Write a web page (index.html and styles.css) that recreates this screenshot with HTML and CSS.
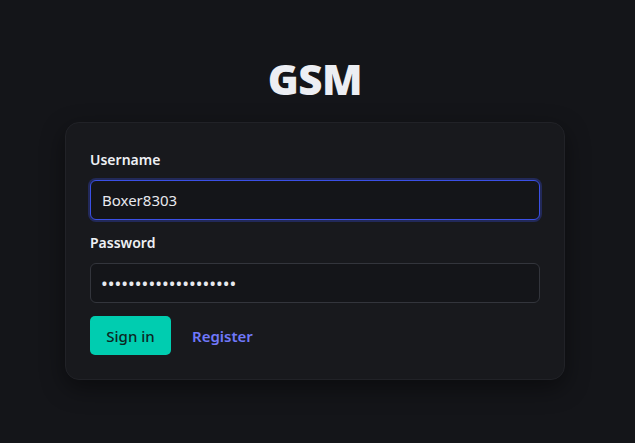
FILE: index.html
```html
<!DOCTYPE html>
<html>
<head>
<meta charset="utf-8">
<link rel="stylesheet" href="styles.css">
</head>
<body>
<main class="page">
  <h1 class="title">GSM</h1>
  <form class="card">
    <label class="label" for="u">Username</label>
    <input class="input input--focus" id="u" type="text" value="Boxer8303">
    <label class="label label--gap" for="p">Password</label>
    <input class="input input--pw" id="p" type="password" value="aaaaaaaaaaaaaaaaaaaa">
    <div class="actions">
      <button class="btn" type="button">Sign in</button>
      <a class="link" href="#">Register</a>
    </div>
  </form>
</main>
</body>
</html>
```
FILE: styles.css
```css
* { box-sizing: border-box; }
html, body { margin: 0; height: 100%; }
body {
  background: #141519;
  font-family: "Noto Sans", "Open Sans", sans-serif;
  color: #e8e9ee;
}
.page {
  display: flex;
  flex-direction: column;
  align-items: center;
  padding-top: 52px;
  padding-right: 5px;
}
.title {
  margin: 0 0 16px;
  font-family: "Open Sans", sans-serif;
  font-weight: 800;
  font-size: 42px;
  line-height: 54px;
  letter-spacing: -0.5px;
  color: #eceef3;
}
.card {
  width: 500px;
  background: #18191d;
  border: 1px solid #212227;
  border-radius: 14px;
  padding: 27px 24px 24px;
  display: flex;
  flex-direction: column;
  box-shadow: 0 8px 24px rgba(0,0,0,0.45);
}
.label {
  font-size: 14px;
  font-weight: 600;
  line-height: 20px;
  color: #eef0f4;
  margin-bottom: 10px;
}
.label--gap { margin-top: 13px; }
.input {
  height: 40px;
  width: 100%;
  background: #141519;
  border: 1px solid #33353c;
  border-radius: 6px;
  padding: 0 11px;
  font-family: inherit;
  font-size: 15px;
  color: #e8e9ee;
  outline: none;
}
.input--pw { font-size: 18px; padding-left: 10px; }
.input--focus {
  border-color: #3b50e6;
  box-shadow: 0 0 0 2px rgba(59, 80, 230, 0.3);
}
.actions {
  margin-top: 13px;
  display: flex;
  align-items: center;
  gap: 21px;
}
.btn {
  height: 39px;
  width: 81px;
  background: #00cdb0;
  border: 0;
  border-radius: 5px;
  font-family: inherit;
  font-size: 15px;
  font-weight: 500;
  color: #0c2622;
}
.link {
  font-size: 15px;
  font-weight: 600;
  color: #7078fa;
  text-decoration: none;
}
```
